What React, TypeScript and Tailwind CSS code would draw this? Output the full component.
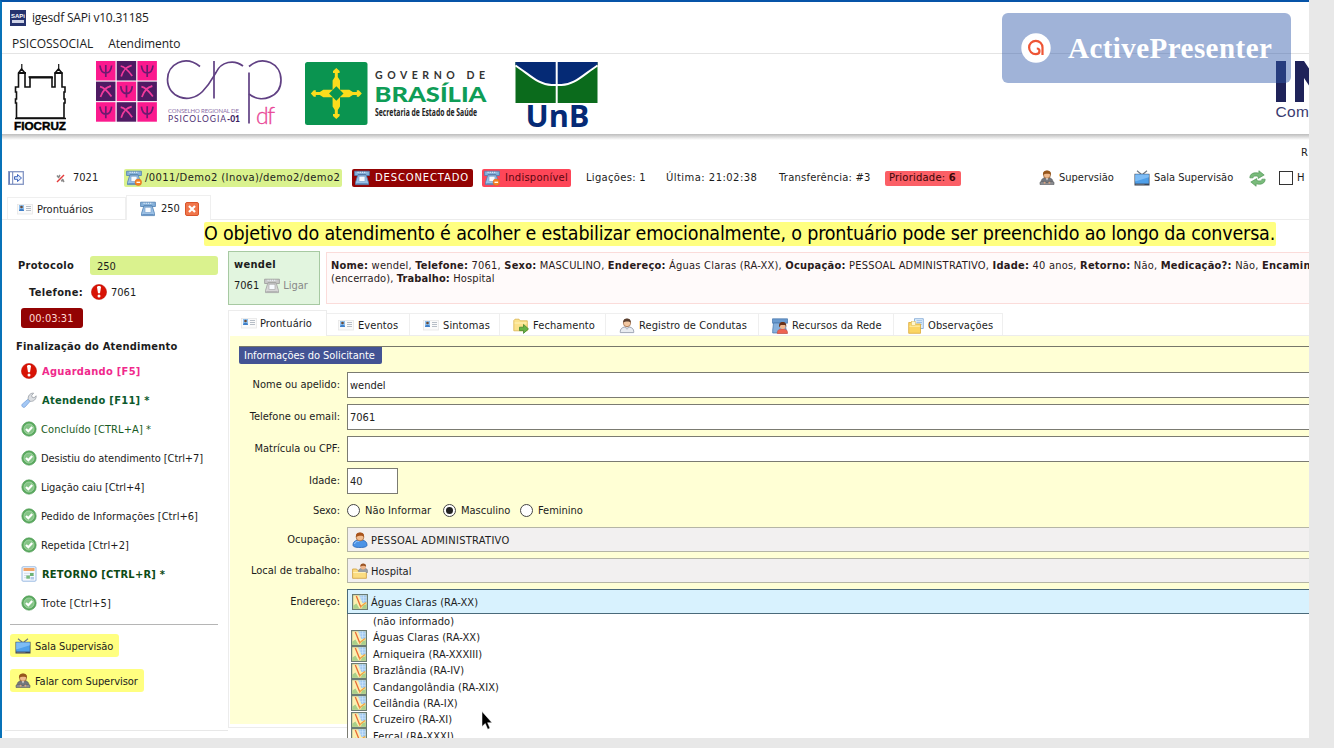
import React from "react";

/* ---------- icons ---------- */

const Svg = ({ children, s = 16, className = "" }: { children: React.ReactNode; s?: number; className?: string }) => (
  <svg width={s} height={s} viewBox="0 0 16 16" className={"shrink-0 " + className}>
    {children}
  </svg>
);

const Phone = ({ minus = false, gray = false }: { minus?: boolean; gray?: boolean }) => (
  <Svg>
    <path d="M.6 1.200h14.800v4.300h-3.600V4.600H4.200v.9H.6z" fill={gray ? "#c8c8c8" : "#86b1da"} stroke={gray ? "#999" : "#4c7db0"} strokeWidth=".8" />
    <path d="M3.500 2.300h9" stroke="#eef5fc" strokeWidth="1" strokeDasharray="1.200 1" />
    <path d="M3.800 5h8.400l2.300 7.500v2.100h-13v-2.100z" fill={gray ? "#d6d6d6" : "#9cc1e6"} stroke={gray ? "#a0a0a0" : "#4c7db0"} strokeWidth=".8" />
    <rect x="5" y="6.200" width="6" height="5.400" fill="#f8fbff" stroke={gray ? "#a0a0a0" : "#6b97c6"} strokeWidth=".6" />
    <path d="M2.300 13.500h11.400" stroke={gray ? "#b5b5b5" : "#6693c4"} />
    {minus && (
      <>
        <circle cx="12.300" cy="12.300" r="3.300" fill="#f58022" stroke="#dd6a1c" strokeWidth=".5" />
        <path d="M10.500 12.300h3.600" stroke="#fff" strokeWidth="1.300" />
      </>
    )}
  </Svg>
);

const Card = () => (
  <Svg>
    <rect x=".5" y="2.500" width="15" height="9.500" fill="#fafafa" stroke="#e6e6e6" strokeWidth=".8" />
    <rect x="2" y="3" width="5" height="6" fill="#8fc0ee" />
    <circle cx="4.500" cy="5" r="1.300" fill="#6b4a35" />
    <path d="M2 9c0-3 5-3 5 0z" fill="#3f7fc9" />
    <path d="M9 4.500h5M9 6.500h5M9 8.500h5" stroke="#aeb6bf" strokeWidth=".9" />
  </Svg>
);

const Supervisor = () => (
  <Svg>
    <path d="M2 13c0-4 2-5.500 6-5.500S14 9 14 13z" fill="#73767c" stroke="#505256" strokeWidth=".6" />
    <circle cx="8" cy="4.800" r="3.600" fill="#efb98c" stroke="#7a4417" strokeWidth=".6" />
    <path d="M4.100 5C3.600 1.500 5.800.5 8 .5s4.400 1 3.900 4.500C10.800 3.300 6 3.200 4.100 5z" fill="#96561c" />
    <path d="M6.900 8.300h2.200L8 10.500z" fill="#e8e8e8" />
    <path d="M1 12.200c2-1.300 4-.3 7 .4 3-.7 5-1.700 7-.4v2.300H1z" fill="#8b8d91" stroke="#56585c" strokeWidth=".6" />
    <circle cx="5.600" cy="12.800" r="1" fill="#d9a582" />
    <circle cx="10.400" cy="12.800" r="1" fill="#d9a582" />
  </Svg>
);

const Tv = () => (
  <Svg>
    <path d="M3 .8 7.300 4.300M13 .8 8.700 4.300" stroke="#6c7680" strokeWidth="1.100" fill="none" />
    <rect x=".5" y="3.800" width="15" height="11.700" fill="#3c4656" />
    <rect x="1.200" y="4.400" width="13.600" height="9.200" fill="#4fa0ea" />
    <path d="M1.200 4.400h13.600v2.800L1.200 11.500z" fill="#7dbcf5" />
    <path d="M1.500 14.600h9" stroke="#73767c" strokeWidth=".8" />
  </Svg>
);

const Refresh = () => (
  <svg width="17" height="17" viewBox="0 0 16 16" className="shrink-0">
    <g fill="#79bb7b" stroke="#4a9150" strokeWidth=".6">
      <path d="M.8 7.400C.8 3.400 4.500 1.800 9.300 3V.7l5 4-5.600 3.200V6.100C6 5.200 4 5.700 3.700 7.400z" />
      <path d="M15.200 8.600c0 4-3.700 5.600-8.500 4.400v2.300l-5-4 5.600-3.200v1.800c2.700.9 4.700.4 5-1.300z" />
    </g>
  </svg>
);

const Alert = () => (
  <Svg>
    <circle cx="8" cy="8" r="7.600" fill="#d81305" stroke="#b90f04" strokeWidth=".5" />
    <path d="M6 3.200c0-1.500 4-1.500 4 0L9 9.200H7z" fill="#fff" />
    <circle cx="8" cy="11.900" r="1.500" fill="#fff" />
  </Svg>
);

const Wrench = () => (
  <Svg>
    <path d="M1.200 12.200 7 7.200l2.200 2-5 5.600c-.8.8-1.900.8-2.700 0s-1-1.900-.3-2.600z" fill="#a4c8f4" stroke="#6f9ad6" strokeWidth=".7" />
    <path d="M7.200 7.400C6.700 4 9 .9 12.600 1.100l-1.900 2.400.5 1.800 1.800.5 2.200-2c.2 3.500-2.700 6-6 5.500z" fill="#dcdfe3" stroke="#8f959c" strokeWidth=".7" />
  </Svg>
);

const Check = () => (
  <Svg>
    <circle cx="8" cy="8" r="7.200" fill="#5aa95f" stroke="#4b9a51" strokeWidth=".6" />
    <circle cx="8" cy="8" r="5" fill="#84c486" stroke="#a5d6a5" strokeWidth=".9" />
    <path d="M5 8l2.300 2.200L11.200 6" stroke="#fff" strokeWidth="2.200" fill="none" />
  </Svg>
);

const Calendar = () => (
  <Svg>
    <rect x="1" y=".8" width="14" height="14.400" rx="1" fill="#f5f9ff" stroke="#8fb2df" strokeWidth=".9" />
    <rect x="2.500" y="2" width="11" height="3" fill="#f1a468" />
    <path d="M3 7.300h10M3 9.500h10M3 11.700h6" stroke="#d0dae8" strokeWidth=".9" />
    <rect x="9" y="7" width="3.600" height="3" fill="#6fb476" />
    <rect x="5.300" y="9.500" width="3.600" height="3.200" fill="#78bb7d" />
    <path d="M9.500 11h3.500v2.500h-3.500z" fill="#b4c9e4" />
  </Svg>
);

const FolderGo = () => (
  <Svg>
    <path d="M.8 2.500 2 1.200h4l1.300 1.600h7v10H.8z" fill="#fbe28c" stroke="#d9b552" strokeWidth=".8" />
    <path d="M1.600 5h12" stroke="#fff3bd" />
    <path d="M6.500 9.200h4V6.400l5 4.500-5 4.500v-2.800h-4z" fill="#67b346" stroke="#3a7f27" strokeWidth=".7" />
  </Svg>
);

const UserGray = () => (
  <Svg>
    <path d="M1.300 14.600c-.4-4 2.200-5.800 6.700-5.800s7.100 1.800 6.700 5.800z" fill="#e9ecf1" stroke="#8b93a3" strokeWidth=".8" />
    <circle cx="8" cy="5" r="3.700" fill="#f3c8a2" stroke="#8d5630" strokeWidth=".6" />
    <path d="M4.200 4.600C4 1.300 6 .4 8 .4s4 .9 3.800 4.200C10.500 3 6 3 4.200 4.600z" fill="#5b4030" />
    <path d="M6 9l2 2.300L10 9" stroke="#a4abb8" fill="none" strokeWidth=".8" />
  </Svg>
);

const PhoneUser = () => (
  <Svg>
    <path d="M.5.8h15v4.400h-15z" fill="#6a9bcf" stroke="#4474aa" strokeWidth=".7" />
    <path d="M1.500 5h11l2.500 10H.7V12z" fill="#86b0dc" stroke="#4474aa" strokeWidth=".7" />
    <path d="M5.300 15.500c0-3.800 2-4.600 5.200-4.600s5 .8 5 4.600z" fill="#ee6351" stroke="#c9493a" strokeWidth=".6" />
    <circle cx="10.700" cy="8" r="2.900" fill="#f0b88e" />
    <path d="M7.300 9.500c-.8-4 .8-5.500 3.400-5.500s4.100 1.500 3.500 5.500l-1-2.500H8.700z" fill="#6b3218" />
  </Svg>
);

const FolderPage = () => (
  <Svg>
    <path d="M6.500.7h8.800v9.800H6.500z" fill="#dfeefc" stroke="#7ba5d3" strokeWidth=".8" />
    <path d="M8.500 2.700H14M8.500 4.500H14M8.500 6.300H14" stroke="#8bb4df" strokeWidth=".8" />
    <path d="M.7 4.500h3.800l1 1.500h7v9.300H.7z" fill="#fbd564" stroke="#dba93a" strokeWidth=".8" />
    <path d="M1.500 8.200h10.300" stroke="#fff0b0" />
    <rect x="3.500" y="3.500" width="4" height="4" fill="#fff6cf" stroke="#d9bb5a" strokeWidth=".5" />
  </Svg>
);

const UserBlue = () => (
  <Svg>
    <path d="M1 13.200C1 9.500 3.500 8 8 8s7 1.500 7 5.200c0 1.400-2.500 2.300-7 2.300s-7-.9-7-2.300z" fill="#4b93e6" stroke="#2763b4" strokeWidth=".8" />
    <path d="M2.500 12c.5-2.200 2-2.800 5-2.800" stroke="#9cc8f8" fill="none" />
    <circle cx="8" cy="5" r="3.900" fill="#f2bd90" stroke="#8a4c1c" strokeWidth=".6" />
    <path d="M4 5C3.500 1.500 5.600.4 8 .4s4.500 1.100 4 4.600C10.500 3 7 3.400 4 5z" fill="#a8541c" />
  </Svg>
);

const FolderUser = () => (
  <Svg>
    <path d="M.6 6h4l1.200 1.500h8.600v7.800H.6z" fill="#fbdc80" stroke="#cf9c38" strokeWidth=".8" />
    <path d="M6.500 9.500c0-3.500 1.500-4.500 4.700-4.500s4.500 1 4.500 4.500z" fill="#9a9da2" stroke="#75787e" strokeWidth=".5" />
    <circle cx="11.200" cy="3.600" r="2.800" fill="#efb68b" />
    <path d="M8.300 3.800C8.100 1.200 9.500.4 11.200.4s3.100.8 2.900 3.400C12.700 2.200 10 2.300 8.300 3.800z" fill="#9a5526" />
    <path d="M1.200 9.500h12.600" stroke="#fff0b8" />
  </Svg>
);

const MapIcon = () => (
  <Svg>
    <rect x=".6" y=".6" width="14.800" height="14.800" fill="#fbf0b0" stroke="#6b7c74" strokeWidth="1.200" />
    <path d="M7 1.300h7.700v7.200L10.500 9z" fill="#9fc8f0" />
    <path d="M9 1.300v6M11.500 1.300v7M7.500 3.800h7.200M8.500 6.300h6.200" stroke="#d5e8fb" strokeWidth=".6" />
    <path d="M1.300 11.500 4.500 9.500l3 5.200H1.300zM11 11.500l3.700-1.500v4.700h-5z" fill="#a9d08a" />
    <path d="M4.300 2 9 13.500" stroke="#ea6a35" strokeWidth="1.300" />
    <path d="M14 8.500 8.300 13" stroke="#f0a040" strokeWidth="1.300" />
  </Svg>
);

/* ---------- logos ---------- */

const Fiocruz = () => (
  <svg width="54" height="72" viewBox="14 60 54 72" className="shrink-0 overflow-visible">
    <path
      d="M16.500 118V103h-1v-4h1v-7h-1v-5h3V73l3-4 3.500 4v14h5V77h-1.500 24H52v10h3V73l3.500-4 3.500 4v14h3v5h-1v7h1v4h-1v15z"
      fill="#fff"
      stroke="#111"
      strokeWidth="1.600"
    />
    <path d="M21.800 64v6M58.700 64v6" stroke="#111" strokeWidth="1.200" />
    <path d="M18 73h8M54.500 73h8M29 77.500h24" stroke="#111" strokeWidth="1.800" />
    <path d="M15 118.500h51" stroke="#111" strokeWidth="1.500" />
    <text x="14" y="129.500" fontFamily="Liberation Sans" fontWeight="700" fontSize="10" textLength="52" lengthAdjust="spacingAndGlyphs" fill="#000" stroke="#000" strokeWidth=".4">FIOCRUZ</text>
  </svg>
);

const Psi = ({ x, y, dark }: { x: number; y: number; dark: boolean }) => (
  <g transform={`translate(${x} ${y})`}>
    <rect width="19.500" height="19.500" fill={dark ? "#4f1a63" : "#fb1a8e"} />
    {dark ? (
      <path d="M4 5c5 1 8 5 11.500 10M15 4.500C10 5.500 6.500 9 4.500 15.500M8.500 7.500l6-3" fill="none" stroke="#f23a9c" strokeWidth="1.700" />
    ) : (
      <path d="M4 4.500c.5 5 2.500 7.500 5.800 7.500s5.300-2.500 5.800-7.500M9.800 4v12" fill="none" stroke="#6d1a70" strokeWidth="1.700" />
    )}
  </g>
);

const Crp = () => (
  <svg width="188" height="68" viewBox="95 60 188 68" className="shrink-0 overflow-visible">
    {[0, 1, 2].map((r) =>
      [0, 1, 2].map((c) => <Psi key={`${r}${c}`} x={96 + c * 20.7} y={61 + r * 20.6} dark={(r + c) % 2 === 1} />),
    )}
    <g fill="none" stroke="#604083" strokeWidth="1.700">
      <path d="M200 66.500C185 54.500 167.500 64 167.500 79.500 167.500 97 189 105 202.500 91.500c8-8 10.500-14.500 13.500-19 5-11 18-13.500 27-6.500" />
      <path d="M214 61v37.500" />
      <path d="M249 72.500v51" />
      <path d="M249 66.500c14-12 32-3 32 13.500 0 17-20 24-32 14" />
    </g>
    <text x="168" y="113" fontFamily="Lato" fontSize="6" textLength="71" fill="#8d6fa8">CONSELHO REGIONAL DE</text>
    <text x="168" y="122.200" fontFamily="Lato" fontSize="8.500" textLength="58" fill="#4f2f74">PSICOLOGIA</text>
    <text x="227" y="122.200" fontFamily="Lato" fontWeight="900" fontSize="8.500" textLength="13" fill="#3c1d63">-01</text>
    <text x="256" y="123.500" fontFamily="Lato" fontWeight="300" fontSize="23" textLength="19" fill="#e94596" stroke="#e94596" strokeWidth=".3">df</text>
  </svg>
);

const Brasilia = () => (
  <svg width="184" height="64" viewBox="304 61 184 64" className="shrink-0 overflow-visible">
    <rect x="305" y="62" width="62.500" height="63" rx="2.500" fill="#0a9450" />
    <g fill="#fbdc1c">
      {[0, 90, 180, 270].map((a) => (
        <path key={a} transform={`rotate(${a} 336.300 93.500)`} d="M332.600 91V80.500l2.200-3.500v-4h-1.800v-2l3.300-3 3.300 3v2h-1.800v4l2.200 3.500V91z" />
      ))}
    </g>
    <path d="M336.300 86.300 343.500 93.500 336.300 100.700 329.100 93.500z" fill="#0a9450" />
    <text x="375" y="79" fontFamily="Lato" fontWeight="700" fontSize="10.500" textLength="110" fill="#333">GOVERNO DE</text>
    <text x="374.500" y="102" fontFamily="Lato" fontWeight="900" fontSize="21.500" textLength="112" lengthAdjust="spacingAndGlyphs" fill="#0f9d57">BRASÍLIA</text>
    <text x="375" y="116" fontFamily="Open Sans" fontWeight="700" fontSize="10" textLength="102" lengthAdjust="spacingAndGlyphs" fill="#222">Secretaria de Estado de Saúde</text>
  </svg>
);

const Unb = () => (
  <svg width="84" height="68" viewBox="515 61 84 68" className="shrink-0 overflow-visible">
    <path d="M515.500 62h82v41h-82z" fill="#0b6b1c" />
    <path d="M515.500 62h82v3c-14 9-23 20-36 20h-10c-13 0-22-11-36-20z" fill="#052a75" />
    <path d="M515.500 65.500c14 9 23 19.500 36 19.500h10c13 0 22-10.500 36-19.500" fill="none" stroke="#fff" strokeWidth="2" />
    <path d="M556.700 61v42" stroke="#fff" strokeWidth="2" />
    <text x="525.500" y="127" fontFamily="Open Sans" fontWeight="700" fontSize="30" textLength="64" lengthAdjust="spacingAndGlyphs" fill="#052a75">UnB</text>
  </svg>
);

/* ---------- small pieces ---------- */

const FormRow = ({ label, h, children }: { label: string; h: string; children: React.ReactNode }) => (
  <div className={"flex items-center " + h}>
    <div className="w-[109px] shrink-0 pr-[7px] text-right whitespace-nowrap">{label}</div>
    {children}
  </div>
);

const Input = ({ value, w = "grow border-r-0" }: { value: string; w?: string }) => (
  <div className={"flex h-[26px] items-center border border-[#7b7b72] bg-white pt-[2px] pl-[2px] text-[#222] " + w}>{value}</div>
);

const Radio = ({ label, on = false, w }: { label: string; on?: boolean; w: string }) => (
  <div className={"flex items-center gap-[5px] whitespace-nowrap " + w}>
    <span className="flex size-[13px] shrink-0 items-center justify-center rounded-full border border-[#444] bg-white">
      {on && <span className="size-[7px] rounded-full bg-[#222]" />}
    </span>
    {label}
  </div>
);

const actions = [
  { icon: <Alert />, text: "Aguardando [F5]", cls: "gap-[5px] font-bold tracking-[.3px] text-[#f0298c]" },
  { icon: <Wrench />, text: "Atendendo [F11] *", cls: "gap-[5px] font-bold tracking-[.3px] text-[#0c5a2c]" },
  { icon: <Check />, text: "Concluído [CTRL+A] *", cls: "gap-[4px] tracking-[.1px] text-[#175a22]" },
  { icon: <Check />, text: "Desistiu do atendimento [Ctrl+7]", cls: "gap-[4px] tracking-[-.08px]" },
  { icon: <Check />, text: "Ligação caiu [Ctrl+4]", cls: "gap-[4px] tracking-[-.08px]" },
  { icon: <Check />, text: "Pedido de Informações [Ctrl+6]", cls: "gap-[4px] tracking-[.04px]" },
  { icon: <Check />, text: "Repetida [Ctrl+2]", cls: "gap-[4px] tracking-[.06px]" },
  { icon: <Calendar />, text: "RETORNO [CTRL+R] *", cls: "gap-[5px] font-bold tracking-[.24px] text-[#0c4a14]" },
  { icon: <Check />, text: "Trote [Ctrl+5]", cls: "gap-[4px] tracking-[.2px]" },
];

const tabs = [
  { icon: <Card />, text: "Eventos", w: "w-[83px]", pl: "pl-[11px]" },
  { icon: <Card />, text: "Sintomas", w: "w-[90px]", pl: "pl-[13px]" },
  { icon: <FolderGo />, text: "Fechamento", w: "w-[106px]", pl: "pl-[13px]" },
  { icon: <UserGray />, text: "Registro de Condutas", w: "w-[153px]", pl: "pl-[13px]" },
  { icon: <PhoneUser />, text: "Recursos da Rede", w: "w-[135px]", pl: "pl-[13px]" },
  { icon: <FolderPage />, text: "Observações", w: "w-[109px]", pl: "pl-[14px]" },
];

const places = [
  "Águas Claras (RA-XX)",
  "Arniqueira (RA-XXXIII)",
  "Brazlândia (RA-IV)",
  "Candangolândia (RA-XIX)",
  "Ceilândia (RA-IX)",
  "Cruzeiro (RA-XI)",
  "Fercal (RA-XXXI)",
];

const facts: [string, string][] = [
  ["Nome", "wendel"],
  ["Telefone", "7061"],
  ["Sexo", "MASCULINO"],
  ["Endereço", "Águas Claras (RA-XX)"],
  ["Ocupação", "PESSOAL ADMINISTRATIVO"],
  ["Idade", "40 anos"],
  ["Retorno", "Não"],
  ["Medicação?", "Não"],
];

/* ---------- page ---------- */

export default function App() {
  return (
    <div className="relative h-[748px] w-[1334px] overflow-hidden bg-[#e8e8e8] font-['DejaVu_Sans_Condensed','DejaVu_Sans',sans-serif] text-[11px] leading-[16px] text-[#1c1c1c]">
      <div className="relative flex h-[738px] w-[1309px] flex-col overflow-hidden border-t-2 border-l-2 border-t-[#0654a8] border-l-[#0872b8] bg-white">
        {/* title and menu */}
        <div className="flex h-[31px] shrink-0 items-center gap-[6px] pl-2 font-['Open_Sans',sans-serif] text-[12px] tracking-[-.22px]">
          <div className="flex size-4 flex-col items-center bg-[#26336e] pt-[3px] tracking-normal text-white">
            <span className="font-['Liberation_Sans',sans-serif] text-[6px] leading-[6px] font-bold">SAPi</span>
            <span className="mt-px h-[3px] w-3 bg-[#cfd3e6]" />
          </div>
          <span>igesdf SAPi v10.31185</span>
        </div>
        <div className="flex h-[21px] shrink-0 items-center gap-[15px] border-b border-[#e4e4e4] pt-[2px] pl-[10px] font-['Open_Sans',sans-serif] text-[12px]">
          <span>PSICOSSOCIAL</span>
          <span className="tracking-[-.1px]">Atendimento</span>
        </div>

        {/* logos */}
        <div className="flex h-[80px] shrink-0 items-start pl-3">
          <div className="pt-[6px]"><Fiocruz /></div>
          <div className="ml-[27px] pt-[6px]"><Crp /></div>
          <div className="ml-[21px] pt-[7px]"><Brasilia /></div>
          <div className="ml-[27px] pt-[7px]"><Unb /></div>
          <div className="ml-[677px] pt-[7px]">
            <svg width="33" height="60" viewBox="1276 61 33 60" className="overflow-visible">
              <path d="M1276 61h10v41h-10zM1295 61h9l16 24v17l-16-24v24h-9z" fill="#1f2359" />
              <text x="1275.500" y="117" fontFamily="Liberation Sans" fontSize="15.500" textLength="33.500" fill="#3a3a70">Com</text>
            </svg>
          </div>
        </div>
        <div className="h-[6px] shrink-0 bg-linear-to-b from-[#bdbdbd] to-white" />

        <div className="flex h-[24px] shrink-0 items-center pt-px pl-[1299px]">R</div>

        {/* status toolbar */}
        <div className="flex h-[26px] shrink-0 items-center pt-[2px] pl-[6px] font-['DejaVu_Sans',sans-serif] text-[10px] tracking-[.4px] whitespace-nowrap">
          <svg width="16" height="14" viewBox="0 0 16 14" className="shrink-0">
            <rect x=".7" y=".7" width="14.600" height="12.600" fill="#fff" stroke="#8496c4" strokeWidth="1.300" />
            <path d="M4.700 1v12M1.500 1v12" stroke="#6a7fb8" />
            <path d="M6.500 5.700h3V3.500L13.500 7l-4 3.500V8.300h-3z" fill="#dbe8fb" stroke="#2d56b5" strokeWidth=".9" />
          </svg>
          <svg width="9" height="9" viewBox="0 0 9 9" className="ml-8 shrink-0">
            <path d="M1 1.500 3 4M4 1 2.500 3.500M6 5l2 3M5 7l3-1" stroke="#8a8a8a" strokeWidth="1.500" />
            <path d="M8 1 1 8" stroke="#e33a3a" strokeWidth="1.500" />
          </svg>
          <span className="ml-[8px] w-[51px] font-['DejaVu_Sans_Condensed','DejaVu_Sans',sans-serif] text-[11px] tracking-normal">7021</span>
          <span className="flex h-[18px] w-[218px] items-center gap-[3px] rounded-[2px] bg-[#daf28e] pl-[2px]">
            <Phone minus />/0011/Demo2 (Inova)/demo2/demo2
          </span>
          <span className="ml-[10px] flex h-[18px] w-[121px] items-center gap-[5px] rounded-[2px] bg-[#930303] pl-[2px] tracking-[.85px] text-white">
            <Phone />DESCONECTADO
          </span>
          <span className="ml-[9px] flex h-[18px] w-[89px] items-center gap-[5px] rounded-[2px] bg-[#fe4658] pl-[2px] tracking-[.25px] text-[#5a0710]">
            <Phone minus />Indisponível
          </span>
          <span className="ml-[15px] w-[80px] tracking-[.3px]">Ligações: 1</span>
          <span className="w-[113px] tracking-[.45px]">Última: 21:02:38</span>
          <span className="w-[106px] tracking-[.2px]">Transferência: #3</span>
          <span className="flex h-[15px] w-[76px] items-center rounded-[2px] bg-[#fb5f66] pl-[4px] tracking-[.2px] text-[#3a0608]">
            Prioridade:&nbsp;<b>6</b>
          </span>
          <div className="ml-[78px] flex w-[95px] items-center gap-[4px] font-['DejaVu_Sans_Condensed','DejaVu_Sans',sans-serif] text-[11px] tracking-normal">
            <Supervisor />Supervsião
          </div>
          <div className="flex w-[115px] items-center gap-[4px] font-['DejaVu_Sans_Condensed','DejaVu_Sans',sans-serif] text-[11px] tracking-normal">
            <Tv />Sala Supervisão
          </div>
          <Refresh />
          <span className="ml-[13px] size-[14px] shrink-0 border border-[#333] bg-white" />
          <span className="ml-[4px]">H</span>
        </div>

        {/* record tabs */}
        <div className="flex h-[30px] shrink-0 items-end border-b border-[#ececec] pl-[5px]">
          <div className="flex h-[22px] w-[119px] items-center gap-[3px] border border-b-0 border-[#efefef] pt-[3px] pl-[9px]">
            <Card /><span className="ml-px">Prontuários</span>
          </div>
          <div className="-mb-px flex h-[25px] w-[85px] items-center gap-[5px] border border-b-0 border-[#efefef] bg-white pt-[2px] pl-[13px]">
            <Phone />250
            <span className="flex size-[14px] items-center justify-center rounded-[2px] border border-[#d9552b] bg-[#f0764b]">
              <svg width="8" height="8" viewBox="0 0 8 8"><path d="M1 1l6 6M7 1 1 7" stroke="#fff" strokeWidth="2.200" /></svg>
            </span>
          </div>
        </div>

        <div className="flex h-[27px] shrink-0 items-center pl-[202px]">
          <div className="flex h-[24px] w-[1072px] items-center rounded-[2px] bg-[#ffff80] pt-px text-[19.500px] leading-[24px] tracking-[-.17px] whitespace-nowrap text-black">
            O objetivo do atendimento é acolher e estabilizar emocionalmente, o prontuário pode ser preenchido ao longo da conversa.
          </div>
        </div>

        <div className="flex grow">
          {/* left column */}
          <div className="flex w-[226px] shrink-0 flex-col items-start whitespace-nowrap">
            <div className="mt-[8px] flex h-[20px] items-center">
              <b className="w-[72px] pt-[2px] pl-4 tracking-[.3px]">Protocolo</b>
              <span className="ml-[16px] h-[19px] w-[128px] rounded-[3px] bg-[#daf28e] pl-[7px] leading-[21px]">250</span>
            </div>
            <div className="mt-[8px] flex h-[18px] items-center">
              <b className="w-[82px] pt-[2px] pl-[27px] tracking-[.35px]">Telefone:</b>
              <span className="ml-[7px] flex items-center gap-[4px]"><Alert /><span className="pt-[2px]">7061</span></span>
            </div>
            <div className="mt-[7px] ml-[19px] h-[20px] w-[62px] rounded-[3px] bg-[#930303] pl-[8px] leading-[21px] text-[#ffd9d2]">00:03:31</div>
            <b className="mt-[11px] ml-[14px] tracking-[.23px]">Finalização do Atendimento</b>
            <div className="mt-[2px] flex flex-col">
              {actions.map((a) => (
                <div key={a.text} className={"flex h-[28.950px] items-center pl-[19px] " + a.cls}>
                  {a.icon}
                  <span className="pt-[2px]">{a.text}</span>
                </div>
              ))}
            </div>
            <div className="mt-[7px] ml-[8px] h-px w-[208px] bg-[#b5b5b5]" />
            <div className="mt-[9px] ml-[8px] flex h-[23px] w-[109px] items-center gap-[4px] rounded-[3px] bg-[#ffff80] pl-[5px]"><Tv /><span className="pt-[3px] tracking-[-.06px]">Sala Supervisão</span></div>
            <div className="mt-[12px] ml-[8px] flex h-[23px] w-[134px] items-center gap-[4px] rounded-[3px] bg-[#ffff80] pl-[5px]"><Supervisor /><span className="pt-[3px] tracking-[-.06px]">Falar com Supervisor</span></div>
            <div className="mt-[38px] ml-[3px] h-px w-[223px] bg-[#e8e8e8]" />
          </div>

          {/* right column */}
          <div className="flex w-[1081px] shrink-0 flex-col pt-[4px]">
            <div className="flex h-[54px] gap-[6px]">
              <div className="w-[92px] shrink-0 border border-[#a7c9a2] bg-[#e2f5df] pt-[5px] pl-[5px]">
                <b className="block tracking-[.3px]">wendel</b>
                <div className="mt-[5px] flex items-center gap-[5px]">7061 <span className="flex items-center gap-[3px] text-[#888]"><Phone gray />Ligar</span></div>
              </div>
              <div className="mt-px h-[52px] w-[1000px] shrink-0 border border-[#fbdcda] bg-[#fffafa] pt-[6px] pl-[4px] leading-[13px] tracking-[.22px] whitespace-nowrap text-[#2a1a1a]">
                {facts.map(([k, v]) => (
                  <span key={k}><b>{k}:</b> {v}, </span>
                ))}
                <b>Encaminhamento:</b>
                <div className="tracking-[.12px]">(encerrado), <b>Trabalho:</b> Hospital</div>
              </div>
            </div>

            <div className="mt-[6px] flex h-[25px] items-end border-b border-[#ececec] tracking-[.1px]">
              <div className="-mb-px flex h-[26px] w-[99px] items-center gap-[3px] border border-b-0 border-[#ececec] bg-white pt-px pl-[12px]"><Card />Prontuário</div>
              {tabs.map((t) => (
                <div key={t.text} className={"flex h-[22px] items-center gap-[4px] border-t border-r border-[#efefef] pt-[2px] whitespace-nowrap " + t.w + " " + t.pl}>
                  {t.icon}
                  {t.text}
                </div>
              ))}
            </div>

            <div className="h-[392px] border-b border-l border-[#ececec] pl-px">
              <div className="h-[388px] bg-[#ffffd5] pt-[10px] pl-[9px]">
                <div className="border-t border-[#77776a]">
                  <div className="h-[17px] w-[143px] rounded-b-[2px] bg-[#435394] pl-[5px] leading-[18px] tracking-[-.04px] text-white">Informações do Solicitante</div>
                </div>
                <div className="-ml-px flex flex-col gap-[6px] pt-[8px]">
                  <FormRow label="Nome ou apelido:" h="h-[26px]"><Input value="wendel" /></FormRow>
                  <FormRow label="Telefone ou email:" h="h-[26px]"><Input value="7061" /></FormRow>
                  <FormRow label="Matrícula ou CPF:" h="h-[26px]"><Input value="" /></FormRow>
                  <FormRow label="Idade:" h="h-[26px]"><Input value="40" w="w-[51px]" /></FormRow>
                </div>
                <div className="-ml-px">
                  <FormRow label="Sexo:" h="h-[33px]">
                    <Radio label="Não Informar" w="w-[96px] tracking-[.1px]" />
                    <Radio label="Masculino" on w="w-[77px]" />
                    <Radio label="Feminino" w="w-[80px]" />
                  </FormRow>
                </div>
                <div className="-ml-px flex flex-col gap-[6px]">
                  <FormRow label="Ocupação:" h="h-[25px]">
                    <div className="flex h-[25px] grow items-center gap-[3px] border border-r-0 border-[#b5b5a5] bg-[#f2f0f0] pl-[4px] tracking-[.3px]"><UserBlue /><span className="pt-[3px]">PESSOAL ADMINISTRATIVO</span></div>
                  </FormRow>
                  <FormRow label="Local de trabalho:" h="h-[25px]">
                    <div className="flex h-[25px] grow items-center gap-[3px] border border-r-0 border-[#b5b5a5] bg-[#f2f0f0] pl-[4px]"><FolderUser /><span className="pt-[3px]">Hospital</span></div>
                  </FormRow>
                  <FormRow label="Endereço:" h="h-[25px]">
                    <div className="relative flex h-[25px] grow items-center gap-[3px] border border-r-0 border-[#4a6a7a] bg-[#d8f2fe] pl-[4px] tracking-[.1px]">
                      <MapIcon /><span className="pt-[3px]">Águas Claras (RA-XX)</span>
                      <div className="absolute top-[24px] -left-px z-10 flex h-[140px] w-[980px] flex-col border-l border-[#7b7b72] bg-white">
                        <div className="h-[15.500px] pl-[25px] leading-[16px]">(não informado)</div>
                        {places.map((p) => (
                          <div key={p} className="flex h-[16.450px] shrink-0 items-center gap-[6px] pl-[3px]"><MapIcon /><span className="pt-px">{p}</span></div>
                        ))}
                      </div>
                    </div>
                  </FormRow>
                </div>
              </div>
            </div>
          </div>
        </div>
      </div>

      {/* mouse pointer */}
      <svg width="12" height="20" viewBox="0 0 12 20" className="absolute top-[711px] left-[481px] z-20">
        <path d="M1 .5v15l3.300-3 2.400 5.800 2.300-1L6.600 11.700H11z" fill="#000" stroke="#fff" strokeWidth=".5" />
      </svg>

      {/* recorder watermark */}
      <div className="absolute top-[13px] left-[1002px] z-30 flex h-[70px] w-[289px] items-center rounded-[6px] bg-[rgba(48,90,170,0.46)] pl-[19px]">
        <svg width="30" height="30" viewBox="0 0 30 30">
          <circle cx="15" cy="15" r="14.700" fill="#fff" />
          <path d="M21.500 22V14.500a6.700 6.700 0 1 0-6.700 6.700c2.200 0 3.700-1.300 3.700-3.200 0-1.600-1.200-2.500-2.700-2.500" fill="none" stroke="#ee5535" strokeWidth="2.200" />
        </svg>
        <span className="ml-[17px] font-['Liberation_Serif',serif] text-[29px] leading-[32px] font-bold tracking-[.45px] text-white">ActivePresenter</span>
      </div>
    </div>
  );
}
